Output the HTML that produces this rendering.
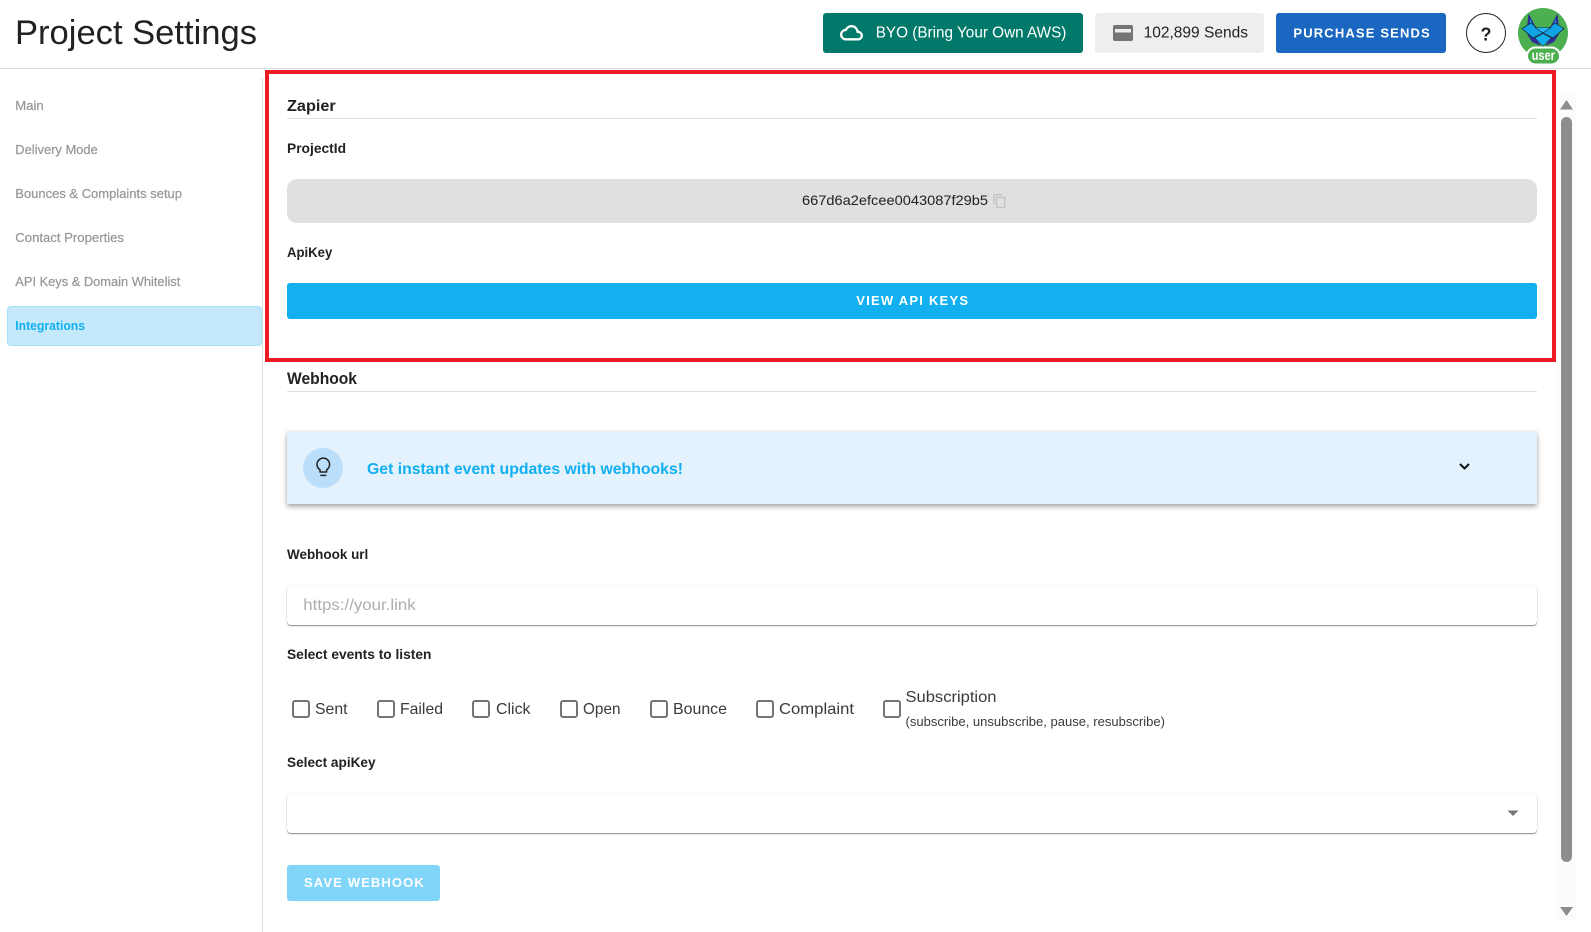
<!DOCTYPE html>
<html lang="en">
<head>
<meta charset="utf-8">
<title>Project Settings</title>
<style>
html,body{margin:0;padding:0;width:1591px;height:932px;overflow:hidden;background:#fff;font-family:"Liberation Sans",Arial,sans-serif}
.b{position:absolute;box-sizing:border-box}
svg.o{position:absolute;left:0;top:0;width:1591px;height:932px}
svg text{font-family:"Liberation Sans",Arial,sans-serif}
.nav{font-size:13px;fill:#979797;stroke:#979797;stroke-width:.22px}
.lab{font-size:14px;font-weight:700;fill:#222}
.ev{font-size:16px;fill:#3a3a3a}
.cb{position:absolute;box-sizing:border-box;width:17.5px;height:17.5px;top:700px;border:2px solid #757575;border-radius:3px;background:#fff}
</style>
</head>
<body>
<!-- header -->
<div class="b" style="left:0;top:68px;width:1591px;height:1px;background:#dedede"></div>
<div class="b" style="left:823px;top:13px;width:260px;height:40px;background:#00796b;border-radius:3px"></div>
<div class="b" style="left:1095px;top:13px;width:169px;height:40px;background:#eeeeee;border-radius:3px"></div>
<div class="b" style="left:1276px;top:13px;width:170px;height:40px;background:#1a67c1;border-radius:3px"></div>
<div class="b" style="left:1466px;top:13px;width:40px;height:40px;border:1.4px solid #222;border-radius:50%;background:#fff"></div>

<!-- sidebar -->
<div class="b" style="left:262px;top:78px;width:1px;height:854px;background:#dedede"></div>
<div class="b" style="left:7px;top:306px;width:255px;height:40px;background:#c4e9fb;border:1px solid #a8e0f9;border-radius:4px"></div>

<!-- scrollbar -->
<div class="b" style="left:1557px;top:94px;width:19px;height:826px;background:#fcfcfc"></div>
<div class="b" style="left:1561px;top:117px;width:11px;height:745px;background:#8d8d8d;border-radius:6px"></div>

<!-- zapier -->
<div class="b" style="left:287px;top:118px;width:1250px;height:1px;background:#e0e0e0"></div>
<div class="b" style="left:287px;top:179px;width:1250px;height:44px;background:#e0e0e0;border-radius:10px"></div>
<div class="b" style="left:287px;top:283px;width:1250px;height:36px;background:#12b0f0;border-radius:3px"></div>
<div class="b" style="left:265px;top:70px;width:1291px;height:292px;border:4.5px solid #ed1c24"></div>

<!-- webhook -->
<div class="b" style="left:287px;top:391px;width:1250px;height:1px;background:#e0e0e0"></div>
<div class="b" style="left:287px;top:432px;width:1250px;height:72px;background:#e3f2fd;box-shadow:0 3px 5px rgba(0,0,0,.3),0 0 4px rgba(0,0,0,.12)"></div>
<div class="b" style="left:303px;top:448px;width:40px;height:40px;background:#bbdefb;border-radius:50%"></div>
<div class="b" style="left:287px;top:585px;width:1250px;height:40px;background:#fff;border-radius:4px;box-shadow:0 1px 1px rgba(0,0,0,.45),0 0 2px rgba(0,0,0,.07)"></div>
<div class="b" style="left:287px;top:793px;width:1250px;height:40px;background:#fff;border-radius:4px;box-shadow:0 1px 1px rgba(0,0,0,.45),0 0 2px rgba(0,0,0,.07)"></div>
<div class="b" style="left:287px;top:865px;width:153px;height:36px;background:#81d5f9;border-radius:3px"></div>

<div class="cb" style="left:292px"></div>
<div class="cb" style="left:377px"></div>
<div class="cb" style="left:472px"></div>
<div class="cb" style="left:560px"></div>
<div class="cb" style="left:650px"></div>
<div class="cb" style="left:756px"></div>
<div class="cb" style="left:883px"></div>

<svg class="o" viewBox="0 0 1591 932" xmlns="http://www.w3.org/2000/svg">
  <!-- header text -->
  <text x="15" y="44" font-size="34" fill="#212121" textLength="242" lengthAdjust="spacingAndGlyphs">Project Settings</text>
  <path transform="translate(840.2,21.5) scale(.94)" fill="#fff" stroke="#fff" stroke-width=".5" d="M19.35 10.04C18.67 6.59 15.64 4 12 4 9.11 4 6.6 5.64 5.35 8.04 2.34 8.36 0 10.91 0 14c0 3.31 2.69 6 6 6h13c2.76 0 5-2.24 5-5 0-2.64-2.05-4.78-4.65-4.96zM19 18H6c-2.21 0-4-1.79-4-4 0-2.05 1.53-3.76 3.56-3.97l1.07-.11.5-.95C8.08 7.14 9.94 6 12 6c2.62 0 4.88 1.86 5.39 4.43l.3 1.5 1.53.11c1.56.1 2.78 1.41 2.78 2.96 0 1.65-1.35 3-3 3z"/>
  <text x="875.7" y="37.5" font-size="16" fill="#fff" textLength="190.7" lengthAdjust="spacingAndGlyphs">BYO (Bring Your Own AWS)</text>
  <rect x="1113" y="25" width="20" height="16" rx="2" fill="#757575"/>
  <rect x="1115" y="29" width="16" height="3.5" fill="#eee"/>
  <text x="1143.6" y="37.5" font-size="16" fill="#222" textLength="104.4" lengthAdjust="spacingAndGlyphs">102,899 Sends</text>
  <text x="1293.4" y="37.5" font-size="13" font-weight="700" fill="#fff" textLength="136.3" lengthAdjust="spacing">PURCHASE SENDS</text>
  <text x="1486" y="40.5" font-size="18" font-weight="700" fill="#222" text-anchor="middle">?</text>

  <!-- avatar -->
  <circle cx="1543" cy="33" r="25" fill="#4caf50"/>
  <polygon points="1528.5,13.5 1536,27.5 1527,28" fill="#2f2f96"/>
  <polygon points="1557.5,13.5 1550,27.5 1559,28" fill="#2f2f96"/>
  <polygon points="1530,19 1534,27 1530,27" fill="#12a5e6"/>
  <polygon points="1556,19 1552,27 1556,27" fill="#12a5e6"/>
  <polygon points="1527,34 1535,37 1541,46 1532,42" fill="#2f2f96"/>
  <polygon points="1559,34 1551,37 1545,46 1554,42" fill="#2f2f96"/>
  <polygon points="1522,28.5 1531,23 1543,33 1533,38" fill="#12a5e6" stroke="#123" stroke-width=".7"/>
  <polygon points="1564,28.5 1555,23 1543,33 1553,38" fill="#12a5e6" stroke="#123" stroke-width=".7"/>
  <polygon points="1535,27.5 1551,27.5 1543,33" fill="#29b6f6" stroke="#123" stroke-width=".6"/>
  <polygon points="1535,38 1543,33.5 1551,38 1543,46" fill="#12b0f0" stroke="#123" stroke-width=".5"/>
  <rect x="1527" y="47.5" width="33" height="17" rx="8.5" fill="#4caf50" stroke="#fff" stroke-width="2"/>
  <text x="1531.7" y="59.8" font-size="13.5" font-weight="700" fill="#fff" textLength="23.3" lengthAdjust="spacingAndGlyphs">user</text>

  <!-- sidebar text -->
  <text class="nav" x="15.3" y="110" textLength="28.4" lengthAdjust="spacingAndGlyphs">Main</text>
  <text class="nav" x="15.3" y="154" textLength="82.4" lengthAdjust="spacingAndGlyphs">Delivery Mode</text>
  <text class="nav" x="15.3" y="198" textLength="166.7" lengthAdjust="spacingAndGlyphs">Bounces &amp; Complaints setup</text>
  <text class="nav" x="15.3" y="242" textLength="108.7" lengthAdjust="spacingAndGlyphs">Contact Properties</text>
  <text class="nav" x="15.3" y="286" textLength="165" lengthAdjust="spacingAndGlyphs">API Keys &amp; Domain Whitelist</text>
  <text x="15.3" y="330" font-size="13" font-weight="700" fill="#12b0f0" textLength="69.7" lengthAdjust="spacingAndGlyphs">Integrations</text>

  <!-- zapier -->
  <text x="287" y="111" font-size="16" font-weight="700" fill="#222" textLength="48.7" lengthAdjust="spacingAndGlyphs">Zapier</text>
  <text class="lab" x="287" y="153" textLength="59" lengthAdjust="spacingAndGlyphs">ProjectId</text>
  <text x="802" y="204.8" font-size="14" fill="#222" textLength="186" lengthAdjust="spacingAndGlyphs">667d6a2efcee0043087f29b5</text>
  <path transform="translate(992,193.4) scale(.64)" fill="#c2c2c2" d="M16 1H4c-1.1 0-2 .9-2 2v14h2V3h12V1zm3 4H8c-1.1 0-2 .9-2 2v14c0 1.1.9 2 2 2h11c1.1 0 2-.9 2-2V7c0-1.1-.9-2-2-2zm0 16H8V7h11v14z"/>
  <text class="lab" x="287" y="257" textLength="45.3" lengthAdjust="spacingAndGlyphs">ApiKey</text>
  <text x="856.3" y="304.8" font-size="13" font-weight="700" fill="#fff" textLength="111.7" lengthAdjust="spacing">VIEW API KEYS</text>

  <!-- webhook -->
  <text x="287" y="384" font-size="17" font-weight="700" fill="#222" textLength="70" lengthAdjust="spacingAndGlyphs">Webhook</text>
  <path d="M320 472v-2.2a6.3 6.3 0 1 1 6.6 0v2.2z" fill="none" stroke="#212121" stroke-width="1.5" stroke-linejoin="round"/>
  <path d="M320.3 475.4h6" fill="none" stroke="#212121" stroke-width="1.5"/>
  <text x="367" y="473.8" font-size="16" font-weight="700" fill="#12b0f0" textLength="316" lengthAdjust="spacingAndGlyphs">Get instant event updates with webhooks!</text>
  <path d="M1460 464l4.5 4.5 4.5-4.5" fill="none" stroke="#111" stroke-width="2"/>
  <text class="lab" x="287" y="559" textLength="81.3" lengthAdjust="spacingAndGlyphs">Webhook url</text>
  <text x="303.3" y="610" font-size="16" fill="#aeaeae" textLength="112.4" lengthAdjust="spacingAndGlyphs">https://your.link</text>
  <text class="lab" x="287" y="659" textLength="144.4" lengthAdjust="spacingAndGlyphs">Select events to listen</text>

  <text class="ev" x="315" y="714" textLength="32.5" lengthAdjust="spacingAndGlyphs">Sent</text>
  <text class="ev" x="400" y="714" textLength="43" lengthAdjust="spacingAndGlyphs">Failed</text>
  <text class="ev" x="496" y="714" textLength="34.5" lengthAdjust="spacingAndGlyphs">Click</text>
  <text class="ev" x="583" y="714" textLength="37.5" lengthAdjust="spacingAndGlyphs">Open</text>
  <text class="ev" x="673" y="714" textLength="54" lengthAdjust="spacingAndGlyphs">Bounce</text>
  <text class="ev" x="779" y="714" textLength="75" lengthAdjust="spacingAndGlyphs">Complaint</text>
  <text class="ev" x="905.5" y="702" textLength="91" lengthAdjust="spacingAndGlyphs">Subscription</text>
  <text x="905.5" y="726" font-size="13" fill="#3a3a3a" textLength="259.5" lengthAdjust="spacingAndGlyphs">(subscribe, unsubscribe, pause, resubscribe)</text>

  <text class="lab" x="287" y="767" textLength="88.6" lengthAdjust="spacingAndGlyphs">Select apiKey</text>
  <polygon points="1507.5,810.5 1518.5,810.5 1513,816" fill="#757575"/>
  <text x="304" y="887" font-size="13" font-weight="700" fill="#fff" textLength="119.8" lengthAdjust="spacing">SAVE WEBHOOK</text>

  <!-- scrollbar arrows -->
  <polygon points="1566.5,100 1573,109.5 1560,109.5" fill="#8d8d8d"/>
  <polygon points="1560,907 1573,907 1566.5,916" fill="#8d8d8d"/>
</svg>
</body>
</html>
